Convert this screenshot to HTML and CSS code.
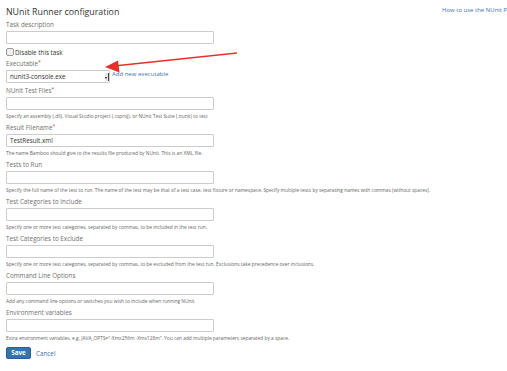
FILE: index.html
```html
<!DOCTYPE html>
<html lang="en">
<head>
    <meta charset="UTF-8">
    <meta name="viewport" content="width=device-width, initial-scale=1.0">
    <title>NUnit Runner configuration</title>
    <link rel="stylesheet" href="styles.css">
</head>
<body>
    <div class="page">
        <div class="head">
            <h1>NUnit Runner configuration</h1>
            <a class="help-link" href="#">How to use the NUnit Plugin</a>
        </div>

        <form class="config" action="#" method="post">
            <div class="field">
                <label for="desc">Task description</label>
                <input type="text" id="desc" class="text">
            </div>

            <div class="check">
                <span class="box"></span>
                <span>Disable this task</span>
            </div>

            <div class="field field-exe">
                <label>Executable<span class="req">*</span></label>
                <div class="exe-row">
                    <div class="select">nunit3-console.exe<span class="drop"></span></div>
                    <a class="add-link" href="#">Add new executable</a>
                </div>
            </div>

            <div class="field">
                <label for="files">NUnit Test Files<span class="req">*</span></label>
                <input type="text" id="files" class="text">
                <div class="hint">Specify an assembly (.dll), Visual Studio project (.csproj), or NUnit Test Suite (.nunit) to test</div>
            </div>

            <div class="field">
                <label for="result">Result Filename<span class="req">*</span></label>
                <input type="text" id="result" class="text" value="TestResult.xml">
                <div class="hint">The name Bamboo should give to the results file produced by NUnit. This is an XML file.</div>
            </div>

            <div class="field">
                <label for="run">Tests to Run</label>
                <input type="text" id="run" class="text">
                <div class="hint">Specify the full name of the test to run. The name of the test may be that of a test case, test fixture or namespace. Specify multiple tests by separating names with commas (without spaces).</div>
            </div>

            <div class="field">
                <label for="incl">Test Categories to Include</label>
                <input type="text" id="incl" class="text">
                <div class="hint">Specify one or more test categories, separated by commas, to be included in the test run.</div>
            </div>

            <div class="field">
                <label for="excl">Test Categories to Exclude</label>
                <input type="text" id="excl" class="text">
                <div class="hint">Specify one or more test categories, separated by commas, to be excluded from the test run. Exclusions take precedence over inclusions.</div>
            </div>

            <div class="field">
                <label for="cmd">Command Line Options</label>
                <input type="text" id="cmd" class="text">
                <div class="hint">Add any command line options or switches you wish to include when running NUnit</div>
            </div>

            <div class="field">
                <label for="env">Environment variables</label>
                <input type="text" id="env" class="text">
                <div class="hint">Extra environment variables. e.g. JAVA_OPTS="-Xmx256m -Xms128m". You can add multiple parameters separated by a space.</div>
            </div>

            <div class="buttons">
                <button type="submit" class="save">Save</button>
                <a class="cancel" href="#">Cancel</a>
            </div>
        </form>

        <!-- red call-out arrow pointing at the executable select -->
        <svg class="callout" width="507" height="90" viewBox="0 0 507 90">
            <line x1="237" y1="53" x2="114" y2="66" stroke="#e8302a" stroke-width="1.6"/>
            <polygon points="105,67 118,60.5 119.5,72.5" fill="#e8302a"/>
        </svg>
    </div>
</body>
</html>
```

FILE: styles.css
```css
html, body {
    margin: 0;
    padding: 0;
    background: #ffffff;
    overflow: hidden;
}

body {
    font-family: "Open Sans", "DejaVu Sans", sans-serif;
    color: #333333;
}

.page {
    position: relative;
    width: 540px;
    padding: 5px 0 0 6px;
}

.head {
    display: flex;
    align-items: flex-start;
}

h1 {
    flex: 0 0 436px;
    margin: 0 0 1px 0;
    font-size: 8.8px;
    line-height: 14px;
    font-weight: normal;
    color: #333333;
}

.help-link {
    margin-top: 1px;
    font-size: 6px;
    line-height: 8px;
    color: #3b73af;
    text-decoration: none;
    white-space: nowrap;
}

.config {
    margin: 0;
}

.field {
    margin-bottom: 4px;
}

.field-exe {
    margin-bottom: 3px;
}

.field label {
    display: block;
    font-size: 6.3px;
    line-height: 9px;
    color: #707070;
    margin-bottom: 2px;
}

.req {
    color: #d04437;
    font-size: 5px;
    vertical-align: top;
    line-height: 6px;
}

.text {
    display: block;
    box-sizing: border-box;
    width: 208px;
    height: 13px;
    margin: 0;
    padding: 0 3px;
    border: 1px solid #cccccc;
    border-radius: 1px;
    background: #ffffff;
    font-family: inherit;
    font-size: 6.3px;
    color: #333333;
}

.hint {
    margin-top: 3px;
    font-size: 4.85px;
    line-height: 6px;
    color: #666666;
    white-space: nowrap;
}

.check {
    display: flex;
    align-items: center;
    gap: 1px;
    height: 8px;
    margin: 0 0 3px 0;
    font-size: 6.3px;
    color: #333333;
}

.box {
    box-sizing: border-box;
    width: 8px;
    height: 8px;
    border: 1px solid #999999;
    border-radius: 2px;
    background: #f0f0f0;
}

.exe-row {
    display: flex;
    align-items: flex-start;
    gap: 2px;
}

.select {
    position: relative;
    box-sizing: border-box;
    width: 104px;
    height: 13px;
    padding: 0 3px;
    border: 1px solid #cccccc;
    border-radius: 1px;
    font-size: 6.3px;
    line-height: 11px;
    color: #333333;
}

.drop {
    position: absolute;
    right: 0;
    top: 2px;
    width: 3px;
    height: 8px;
    border-right: 1px solid #444444;
    background: #e6e6e6;
}

.drop::after {
    content: "";
    position: absolute;
    left: 0;
    top: 4px;
    border-left: 1.5px solid transparent;
    border-right: 1.5px solid transparent;
    border-top: 2px solid #111111;
}

.add-link {
    margin-top: 0;
    font-size: 6px;
    line-height: 8px;
    color: #3b73af;
    text-decoration: none;
}

.buttons {
    display: flex;
    align-items: center;
    gap: 5px;
    margin-top: 6px;
}

.save {
    box-sizing: border-box;
    height: 12px;
    width: 25px;
    padding: 0;
    border: 1px solid #2a5f96;
    border-radius: 2px;
    background: #3572b0;
    color: #ffffff;
    font-family: inherit;
    font-size: 6.3px;
    font-weight: bold;
    line-height: 10px;
}

.cancel {
    font-size: 6.3px;
    color: #3b73af;
    text-decoration: none;
}

.callout {
    position: absolute;
    left: 0;
    top: 0;
    pointer-events: none;
}
```
